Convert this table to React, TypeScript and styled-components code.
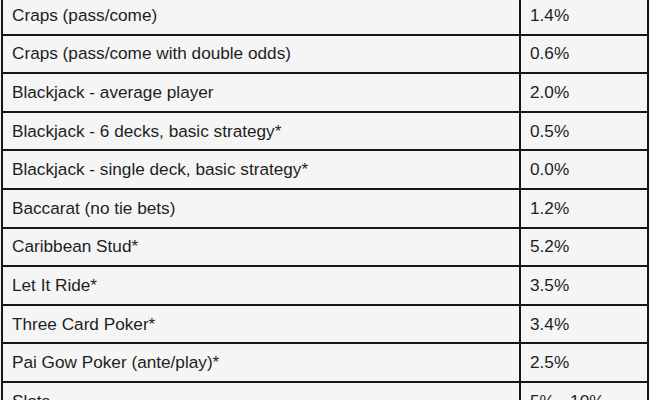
import React from "react";
import styled, { createGlobalStyle } from "styled-components";

const GlobalStyle = createGlobalStyle`
  html, body {
    margin: 0;
    padding: 0;
    background: #f4f4f4;
  }
`;

const Page = styled.div`
  width: 650px;
  height: 400px;
  overflow: hidden;
  background: #f4f4f4;
`;

const EdgeTable = styled.table`
  border-collapse: collapse;
  margin: -5px 0 0 1px;
  width: 648px;
  table-layout: fixed;
  font-family: "Liberation Sans", Arial, sans-serif;
  font-size: 17.2px;
  color: #1e1e1e;
`;

const Cell = styled.td<{ $narrow?: boolean }>`
  border: 2px solid #161616;
  background: #f5f5f5;
  height: 36.6px;
  padding: 0 0 0 9px;
  width: ${({ $narrow }) => ($narrow ? "117px" : "auto")};
  white-space: nowrap;
  overflow: hidden;
`;

const rows: [string, string][] = [
  ["Craps (pass/come)", "1.4%"],
  ["Craps (pass/come with double odds)", "0.6%"],
  ["Blackjack - average player", "2.0%"],
  ["Blackjack - 6 decks, basic strategy*", "0.5%"],
  ["Blackjack - single deck, basic strategy*", "0.0%"],
  ["Baccarat (no tie bets)", "1.2%"],
  ["Caribbean Stud*", "5.2%"],
  ["Let It Ride*", "3.5%"],
  ["Three Card Poker*", "3.4%"],
  ["Pai Gow Poker (ante/play)*", "2.5%"],
  ["Slots", "5% - 10%"],
];

const App: React.FC = () => {
  return (
    <Page>
      <GlobalStyle />
      <EdgeTable>
        <tbody>
          {rows.map(([game, edge]) => (
            <tr key={game}>
              <Cell>{game}</Cell>
              <Cell $narrow>{edge}</Cell>
            </tr>
          ))}
        </tbody>
      </EdgeTable>
    </Page>
  );
};

export default App;
